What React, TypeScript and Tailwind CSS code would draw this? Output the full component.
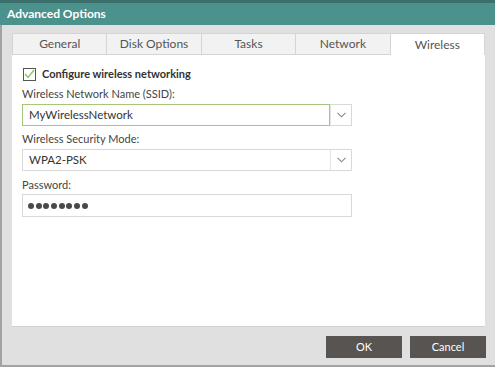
import React from 'react';

const tabs = ['General', 'Disk Options', 'Tasks', 'Network', 'Wireless'];

function Chevron() {
  return (
    <svg width="9" height="6" viewBox="0 0 9 6" fill="none">
      <polyline points="0.5,0.8 4.5,4.8 8.5,0.8" stroke="#8a8a8a" strokeWidth="1.1" />
    </svg>
  );
}

function Combo({ value, active }: { value: string; active?: boolean }) {
  return (
    <div className="flex h-[22px] w-[330px]">
      <div
        className={`flex-1 flex items-center pl-[6px] bg-white border text-[11.5px] text-[#333] ${
          active ? 'border-[#a9c57c]' : 'border-[#d9d9d9] border-r-0'
        }`}
      >
        {value}
      </div>
      <div className="w-[22px] flex items-center justify-center bg-white border border-[#d9d9d9] border-l-[#e4e4e4]">
        <Chevron />
      </div>
    </div>
  );
}

export default function App() {
  return (
    <div
      className="w-[495px] h-[367px] flex flex-col overflow-hidden"
      style={{ fontFamily: 'Lato, "Open Sans", sans-serif' }}
    >
      <div className="h-[3px] bg-[#3b6f6b]" />
      <div className="h-[22px] bg-[#4b918c] flex items-center pl-[7px]">
        <span className="text-white font-bold text-[12px]">Advanced Options</span>
      </div>

      <div className="flex-1 bg-[#e0e0e0] border-l-2 border-b-2 border-[#a3a3a3] pl-[10px] pr-[10px] pt-[8px] flex flex-col">
        <div className="grid grid-cols-5 h-[22px] border-t border-l border-[#d5d5d5]">
          {tabs.map((t, i) => {
            const sel = i === tabs.length - 1;
            return (
              <div
                key={t}
                className={`flex items-center justify-center text-[12px] text-[#555] border-r border-[#d5d5d5] ${
                  sel ? 'bg-white' : 'bg-[#f2f2f2] border-b'
                }`}
              >
                {t}
              </div>
            );
          })}
        </div>

        <div className="h-[272px] bg-white border-b border-[#d0d0d0] pl-[10px] pt-[12px] flex flex-col">
          <div className="flex items-center gap-[6px] h-[14px] pl-[1px]">
            <div className="w-[13px] h-[13px] border border-[#555] flex items-center justify-center">
              <svg width="11" height="10" viewBox="0 0 11 10" fill="none">
                <polyline points="1,5 4,8.5 10,1" stroke="#8cc56a" strokeWidth="1.4" />
              </svg>
            </div>
            <span className="text-[11px] font-bold text-[#333]">Configure wireless networking</span>
          </div>

          <div className="mt-[5px] h-[16px] text-[11px] text-[#444] leading-[16px]">Wireless Network Name (SSID):</div>
          <div className="mt-[2px]">
            <Combo value="MyWirelessNetwork" active />
          </div>

          <div className="mt-[5px] h-[16px] text-[11px] text-[#444] leading-[16px]">Wireless Security Mode:</div>
          <div className="mt-[2px]">
            <Combo value="WPA2-PSK" />
          </div>

          <div className="mt-[6px] h-[16px] text-[11px] text-[#444] leading-[16px]">Password:</div>
          <div className="mt-[1px] h-[23px] w-[330px] bg-white border border-[#d9d9d9] flex items-center pl-[5px] gap-[1.7px]">
            {Array.from({ length: 8 }).map((_, i) => (
              <div key={i} className="w-[6px] h-[6px] rounded-full bg-[#4a4a4a]" />
            ))}
          </div>
        </div>

        <div className="mt-[9px] flex justify-end gap-[8px]">
          <button className="w-[76px] h-[22px] bg-[#575452] text-white text-[11px]">OK</button>
          <button className="w-[76px] h-[22px] bg-[#575452] text-white text-[11px] mr-[-1px]">Cancel</button>
        </div>
      </div>
    </div>
  );
}
